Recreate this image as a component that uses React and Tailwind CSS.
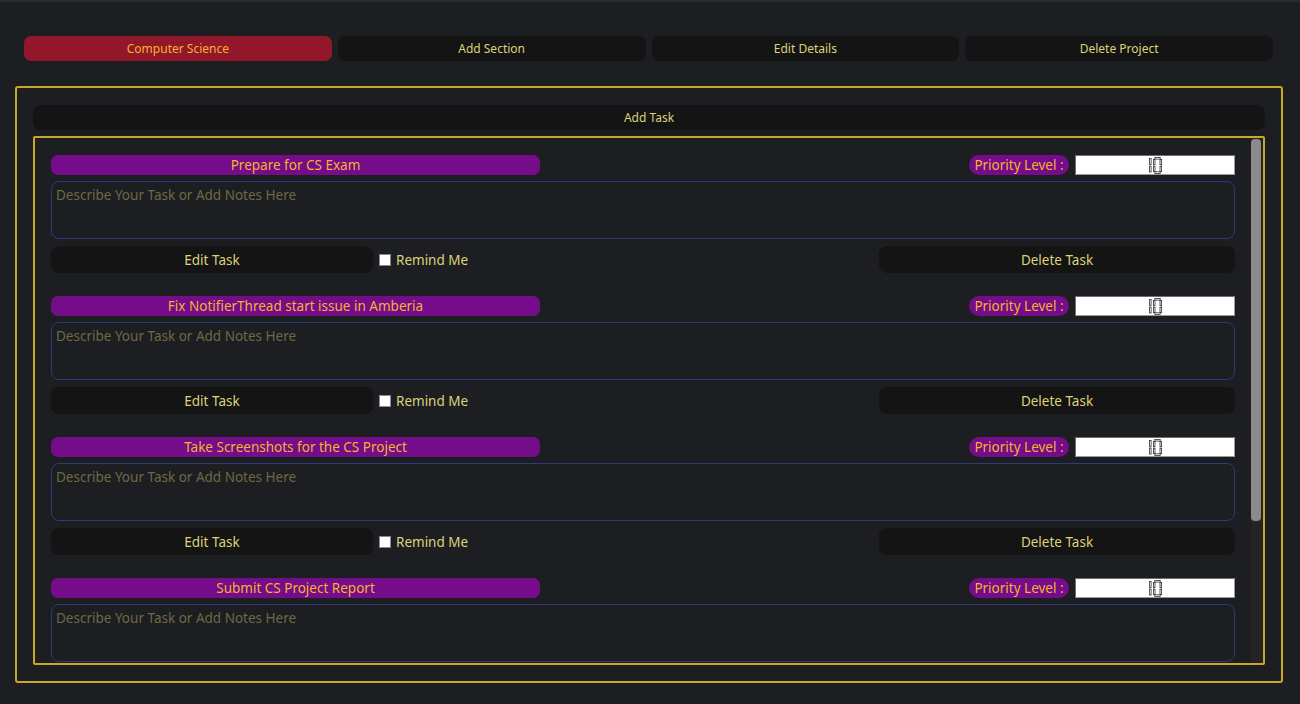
import { useState } from 'react'

const TABS = ['Computer Science', 'Add Section', 'Edit Details', 'Delete Project']

const TASKS = [
  'Prepare for CS Exam',
  'Fix NotifierThread start issue in Amberia',
  'Take Screenshots for the CS Project',
  'Submit CS Project Report',
]

function LcdTen() {
  // hollow seven-segment "10"
  return (
    <svg width="13" height="17" viewBox="0 0 13 17" className="block">
      <g fill="none" stroke="#333" strokeWidth="0.8">
        <rect x="0.5" y="1.5" width="1.6" height="6" />
        <rect x="0.5" y="9" width="1.6" height="6" />
        <rect x="5.8" y="0.5" width="5.4" height="1.6" />
        <rect x="4.4" y="2.4" width="1.6" height="5.4" />
        <rect x="11" y="2.4" width="1.6" height="5.4" />
        <rect x="4.4" y="9.2" width="1.6" height="5.4" />
        <rect x="11" y="9.2" width="1.6" height="5.4" />
        <rect x="5.8" y="14.8" width="5.4" height="1.6" />
      </g>
    </svg>
  )
}

function TaskCard({ title }) {
  const [remind, setRemind] = useState(false)
  return (
    <div className="flex flex-col">
      <div className="flex h-[20px] items-center">
        <div className="flex h-[20px] w-[489px] items-center justify-center rounded-[7px] bg-[#750c89] pt-[1px] text-[13.5px] text-[#f7b12f]">
          {title}
        </div>
        <div className="flex-1" />
        <div className="flex h-[20px] w-[100px] items-center justify-center rounded-full bg-[#750c89] pt-[1px] text-[13.5px] text-[#f7b12f]">
          Priority Level :
        </div>
        <div className="ml-[6px] flex h-[20px] w-[160px] items-center justify-center border border-[#9a9a9a] border-l-[#6e6e6e] border-t-[#6e6e6e] bg-white">
          <LcdTen />
        </div>
      </div>
      <textarea
        placeholder="Describe Your Task or Add Notes Here"
        className="mt-[6px] h-[58px] w-full resize-none rounded-[8px] border border-[#2e3a7c] bg-[#1d1e22] px-[4px] pb-[2px] pt-[3px] text-[13.5px] text-[#d8cf7a] outline-none placeholder:text-[#6d6a43]"
      />
      <div className="mt-[7px] flex h-[27px] items-center">
        <button className="h-[27px] w-[322px] rounded-[8px] bg-[#141414] pt-[1px] text-[13.5px] text-[#ddd27a]">
          Edit Task
        </button>
        <label className="ml-[6px] flex items-center gap-[5px] pt-[1px] text-[13.5px] text-[#ddd27a]">
          <span
            onClick={() => setRemind(!remind)}
            className="flex h-[12px] w-[12px] items-center justify-center border border-[#888] bg-white text-[9px] text-black"
          >
            {remind ? '✓' : ''}
          </span>
          Remind Me
        </label>
        <div className="flex-1" />
        <button className="h-[27px] w-[356px] rounded-[8px] bg-[#141414] pt-[1px] text-[13.5px] text-[#ddd27a]">
          Delete Task
        </button>
      </div>
    </div>
  )
}

export default function App() {
  const [active, setActive] = useState(0)

  return (
    <div
      className="h-[704px] w-[1300px] overflow-hidden border-t-2 border-[#272b35] bg-[#1d1e22]"
      style={{ fontFamily: '"Noto Sans", "Open Sans", sans-serif' }}
    >
      <div className="flex gap-[6px] pl-[24px] pr-[27px] pt-[34px]">
        {TABS.map((tab, i) => (
          <button
            key={tab}
            onClick={() => setActive(i)}
            className={
              i === active
                ? 'h-[25px] flex-1 rounded-[7px] bg-[#93172b] pt-[1px] text-[12px] text-[#f7b12f]'
                : 'h-[25px] flex-1 rounded-[7px] bg-[#141414] pt-[1px] text-[12px] text-[#ddd27a]'
            }
          >
            {tab}
          </button>
        ))}
      </div>

      <div className="ml-[15px] mt-[25px] flex h-[597px] w-[1268px] flex-col rounded-[3px] border-2 border-[#c9a822] px-[16px] pb-[16px] pt-[17px]">
        <button className="h-[25px] w-full rounded-[8px] bg-[#141414] pt-[1px] text-[12px] text-[#ddd27a]">
          Add Task
        </button>
        <div className="mt-[6px] flex min-h-0 flex-1 rounded-[2px] border-2 border-[#c9a822]">
          <div className="flex min-w-0 flex-1 flex-col gap-[23px] overflow-hidden pl-[16px] pr-[16px] pt-[17px]">
            {TASKS.map((t) => (
              <TaskCard key={t} title={t} />
            ))}
          </div>
          <div className="w-[12px] bg-[#242424] pb-[2px] pr-[1px] pt-[1px]">
            <div className="h-[382px] w-[10px] rounded-[4px] bg-[#8a8a8a]" />
          </div>
        </div>
      </div>
    </div>
  )
}
